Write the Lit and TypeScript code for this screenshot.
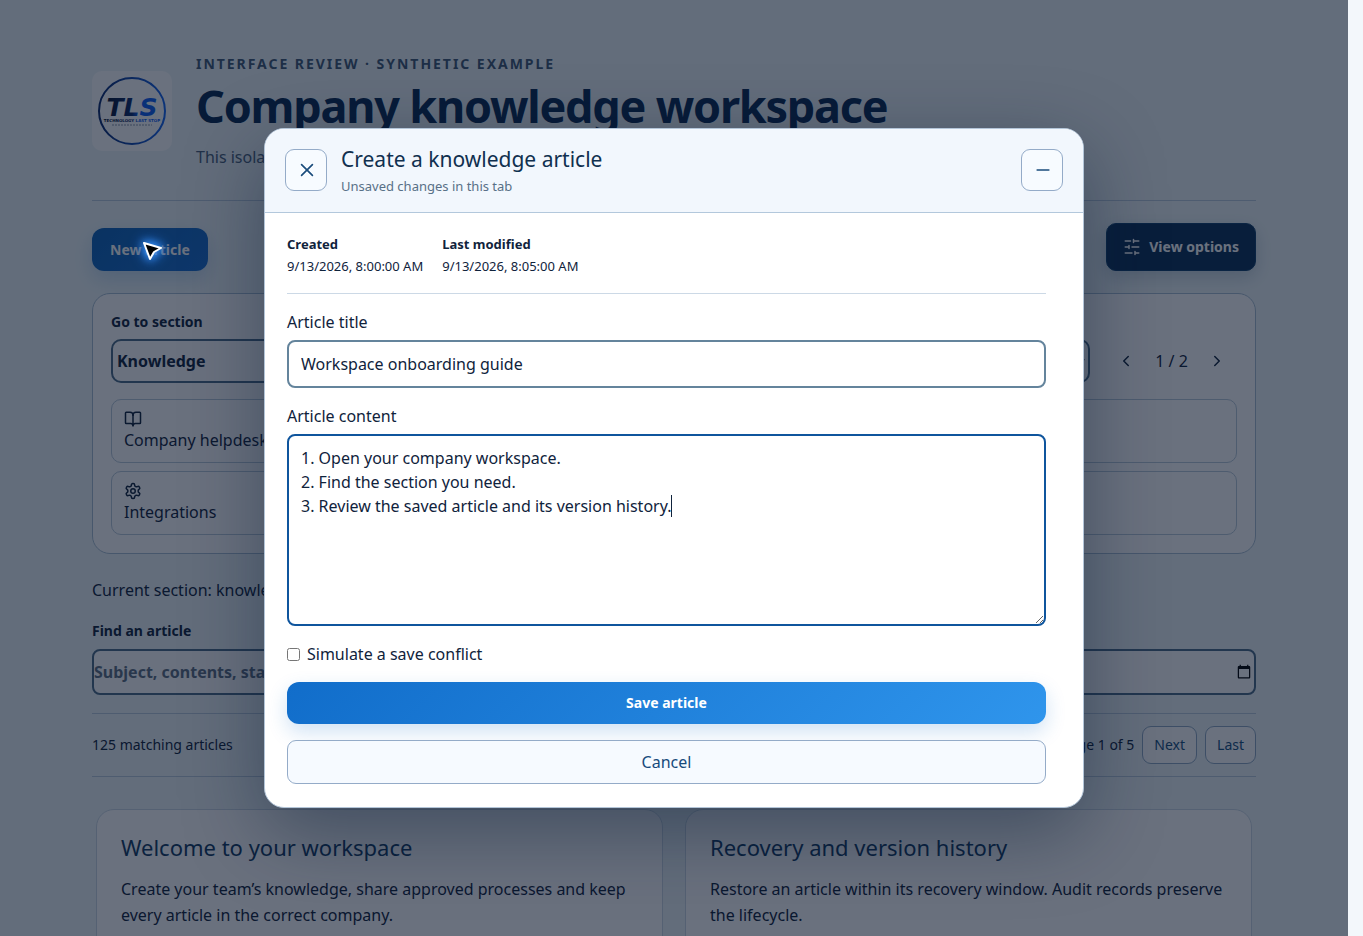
import { LitElement, html, css, svg } from "lit";
import { customElement, state } from "lit/decorators.js";

const logo = html`<svg class="logo" viewBox="0 0 80 80" role="img" aria-label="Technology Last Stop">
  <defs>
    <linearGradient id="ring" x1="0" y1="0" x2="1" y2="0">
      <stop offset="0" stop-color="#0c2a6b" />
      <stop offset="1" stop-color="#1666f0" />
    </linearGradient>
    <linearGradient id="mark" x1="0" y1="0" x2="1" y2="0">
      <stop offset="0" stop-color="#06142f" />
      <stop offset="0.5" stop-color="#0c2a6b" />
      <stop offset="0.62" stop-color="#0d5cf0" />
      <stop offset="1" stop-color="#0d5cf0" />
    </linearGradient>
  </defs>
  <circle cx="40" cy="40" r="33" fill="none" stroke="url(#ring)" stroke-width="2" />
  <text class="mark" x="40" y="45" text-anchor="middle" fill="url(#mark)">TLS</text>
  <text class="motto" x="40" y="51" text-anchor="middle" fill="url(#mark)">TECHNOLOGY LAST STOP</text>
  <path d="M20 54h40" stroke="#8a97ab" stroke-width="1" stroke-dasharray="2 1" />
</svg>`;

const icon = (size: number, body: unknown) => html`<svg
  width=${size}
  height=${size}
  viewBox="0 0 24 24"
  fill="none"
  stroke="currentColor"
  stroke-width="2"
  stroke-linecap="round"
  stroke-linejoin="round"
  aria-hidden="true"
>${body}</svg>`;

const book = svg`<path d="M12 7v14" /><path d="M3 18a1 1 0 0 1-1-1V4a1 1 0 0 1 1-1h5a4 4 0 0 1 4 4 4 4 0 0 1 4-4h5a1 1 0 0 1 1 1v13a1 1 0 0 1-1 1h-6a3 3 0 0 0-3 3 3 3 0 0 0-3-3z" />`;
const gear = svg`<path d="M12.22 2h-.44a2 2 0 0 0-2 2v.18a2 2 0 0 1-1 1.73l-.43.25a2 2 0 0 1-2 0l-.15-.08a2 2 0 0 0-2.73.73l-.22.38a2 2 0 0 0 .73 2.73l.15.1a2 2 0 0 1 1 1.72v.51a2 2 0 0 1-1 1.74l-.15.09a2 2 0 0 0-.73 2.73l.22.38a2 2 0 0 0 2.73.73l.15-.08a2 2 0 0 1 2 0l.43.25a2 2 0 0 1 1 1.73V20a2 2 0 0 0 2 2h.44a2 2 0 0 0 2-2v-.18a2 2 0 0 1 1-1.73l.43-.25a2 2 0 0 1 2 0l.15.08a2 2 0 0 0 2.73-.73l.22-.39a2 2 0 0 0-.73-2.73l-.15-.08a2 2 0 0 1-1-1.74v-.5a2 2 0 0 1 1-1.74l.15-.09a2 2 0 0 0 .73-2.73l-.22-.38a2 2 0 0 0-2.73-.73l-.15.08a2 2 0 0 1-2 0l-.43-.25a2 2 0 0 1-1-1.73V4a2 2 0 0 0-2-2z" /><circle cx="12" cy="12" r="3" />`;
const sliders = svg`<path d="M21 4h-7M10 4H3M21 12h-9M8 12H3M21 20h-5M12 20H3M14 2v4M8 10v4M16 18v4" />`;

@customElement("app-root")
export class AppRoot extends LitElement {
  @state() private content = [
    "1. Open your company workspace.",
    "2. Find the section you need.",
    "3. Review the saved article and its version history.",
  ].join("\n");

  static styles = css`
    :host {
      display: block;
      font: 16px/24px "Noto Sans", sans-serif;
      color: #10233c;
      background: #f3f7fb;
    }
    * {
      box-sizing: border-box;
    }
    h1, h2, p, dl, dd {
      margin: 0;
    }
    button, input, select, textarea {
      font: inherit;
      color: inherit;
      margin: 0;
    }
    button {
      cursor: pointer;
    }
    .viewport {
      display: grid;
      grid-template-columns: minmax(0, 1fr) 15px;
      height: 100vh;
      overflow: hidden;
    }
    .stage {
      position: relative;
      overflow: hidden;
      background: #eef6f8;
    }
    .page {
      max-width: 1164px;
      margin: 0 auto;
      padding-top: 52px;
    }
    .masthead {
      display: flex;
      align-items: center;
      gap: 24px;
      padding-bottom: 31px;
      border-bottom: 1px solid #b9cbdc;
    }
    .logo {
      width: 80px;
      height: 80px;
      border-radius: 10px;
      background: #fff;
      flex: none;
    }
    .mark {
      font: italic bold 25px "DejaVu Sans", sans-serif;
    }
    .motto {
      font: bold 4px "DejaVu Sans", sans-serif;
    }
    .eyebrow {
      font-size: 14px;
      font-weight: 700;
      letter-spacing: 0.14em;
      color: #3f5874;
    }
    h1 {
      font-size: 45px;
      line-height: 60px;
      font-weight: 700;
      letter-spacing: -0.027em;
      color: #082a52;
    }
    .intro {
      margin-top: 9px;
      color: #4a6078;
    }
    .toolbar {
      display: flex;
      justify-content: space-between;
      align-items: center;
      margin-top: 22px;
    }
    .primary {
      border: 0;
      border-radius: 12px;
      padding: 0 18px;
      height: 42px;
      font-size: 14px;
      font-weight: 700;
      color: #fff;
      background: linear-gradient(135deg, #116dca, #2f95ec);
      box-shadow: 0 8px 20px rgba(20, 110, 200, 0.2);
    }
    .toolbar .primary {
      height: 43px;
      margin-top: 5px;
      background: linear-gradient(135deg, #0f63b8, #1a6fd0);
    }
    .options {
      display: flex;
      align-items: center;
      gap: 8px;
      height: 48px;
      padding: 0 16px;
      border: 1px solid #11406c;
      border-radius: 10px;
      font-size: 14px;
      font-weight: 700;
      color: #fff;
      background: #0b3158;
      box-shadow: 0 6px 18px rgba(11, 49, 88, 0.2);
    }
    .panel {
      margin-top: 22px;
      padding: 18px;
      border: 1px solid #a9bfd2;
      border-radius: 18px;
      background: #fff;
    }
    .label {
      display: block;
      font-size: 14px;
      line-height: 20px;
      font-weight: 700;
    }
    .switcher {
      display: flex;
      align-items: center;
      margin-top: 7px;
    }
    .switcher select {
      flex: 1;
      min-width: 0;
      height: 44px;
      border: 2px solid #4c6c88;
      border-radius: 10px;
      background: #fff;
      font-weight: 700;
    }
    .pager {
      display: flex;
      align-items: center;
      padding-left: 16px;
    }
    .pager button {
      display: grid;
      place-items: center;
      width: 40px;
      height: 40px;
      padding: 0;
      border: 0;
      background: none;
    }
    .pager span {
      width: 51px;
      text-align: center;
    }
    .tiles {
      display: grid;
      grid-template-columns: repeat(3, minmax(0, 1fr));
      gap: 8px;
      margin-top: 16px;
    }
    .tile {
      display: flex;
      flex-direction: column;
      align-items: flex-start;
      height: 64px;
      padding: 10px 12px;
      border: 1px solid #b9cad9;
      border-radius: 10px;
      background: #fff;
    }
    .current {
      margin-top: 24px;
    }
    .filters {
      display: grid;
      grid-template-columns: 1fr 1fr;
      gap: 16px;
      margin-top: 19px;
    }
    .filters input {
      display: block;
      width: 100%;
      height: 46px;
      margin-top: 8px;
      padding: 0;
      border: 2px solid #4c6c88;
      border-radius: 8px;
      background: #fff;
      font-weight: 700;
    }
    .filters input::placeholder {
      color: #5d6f82;
    }
    .results {
      display: flex;
      align-items: center;
      gap: 8px;
      height: 64px;
      margin-top: 18px;
      border-top: 1px solid #b9cbdc;
      border-bottom: 1px solid #b9cbdc;
      font-size: 14px;
    }
    .results span:first-child {
      flex: 1;
    }
    .results button {
      height: 38px;
      padding: 0 11px;
      border: 1px solid #8fa9c2;
      border-radius: 9px;
      background: #fff;
      color: #17507f;
    }
    .cards {
      display: grid;
      grid-template-columns: 1fr 1fr;
      gap: 22px;
      padding: 32px 4px 0;
    }
    .card {
      min-height: 220px;
      padding: 23px 24px;
      border: 1px solid #cbd8e4;
      border-radius: 18px;
      background: #fff;
    }
    .card h2 {
      font-size: 22px;
      line-height: 28px;
      font-weight: 400;
      color: #123a63;
    }
    .card p {
      margin-top: 15px;
      line-height: 26px;
    }
    .backdrop {
      position: absolute;
      inset: 0;
      display: flex;
      align-items: center;
      justify-content: center;
      background: rgba(6, 18, 40, 0.6);
    }
    .dialog {
      width: 820px;
      max-width: calc(100% - 32px);
      border: 1px solid #b3c5d8;
      border-radius: 20px;
      overflow: hidden;
      background: #fff;
      box-shadow: 0 24px 80px rgba(3, 22, 50, 0.4);
    }
    .dialog header {
      display: flex;
      align-items: center;
      gap: 14px;
      padding: 15px 20px 16px;
      border-bottom: 1px solid #b3c8dc;
      background: #f2f7fd;
    }
    .heading {
      flex: 1;
    }
    .heading h2 {
      font-size: 21px;
      line-height: 30px;
      font-weight: 400;
      color: #10304f;
    }
    .heading p {
      margin-top: 2px;
      font-size: 13px;
      line-height: 20px;
      color: #587087;
    }
    .square {
      display: grid;
      place-items: center;
      width: 42px;
      height: 42px;
      padding: 0 0 0 2px;
      border: 1px solid #94abc8;
      border-radius: 9px;
      background: #f7fbff;
      color: #1a4c7c;
    }
    .body {
      padding: 20px 37px 23px 22px;
    }
    .meta {
      display: flex;
      gap: 19px;
      padding-bottom: 16px;
      border-bottom: 1px solid #ccd9e6;
      font-size: 13px;
      line-height: 22px;
    }
    .meta dt {
      font-weight: 700;
    }
    .field {
      display: block;
      margin-top: 16px;
    }
    .field input, .field textarea {
      display: block;
      width: 100%;
      padding: 10px 12px;
      border: 2px solid #64849c;
      border-radius: 8px;
      background: #fff;
    }
    .field input {
      height: 48px;
    }
    .field textarea {
      height: 192px;
      resize: vertical;
      caret-color: transparent;
    }
    .field input:focus, .field textarea:focus {
      outline: none;
      border-color: #0f559d;
    }
    .control {
      display: block;
      position: relative;
      margin-top: 6px;
    }
    .caret {
      position: absolute;
      left: 384px;
      top: 61px;
      width: 1px;
      height: 22px;
      background: #10233c;
    }
    .check {
      display: flex;
      align-items: center;
      gap: 7px;
      margin-top: 16px;
    }
    .check input {
      width: 13px;
      height: 13px;
    }
    .actions {
      display: grid;
      gap: 16px;
      margin-top: 16px;
    }
    .cancel {
      height: 44px;
      border: 1px solid #94abc8;
      border-radius: 9px;
      background: #f6faff;
      color: #174a7c;
    }
    .pointer {
      position: absolute;
      left: 132px;
      top: 230px;
      width: 40px;
      height: 40px;
      filter: drop-shadow(0 0 4px #3a94ff) drop-shadow(0 0 6px #2f8cff);
      pointer-events: none;
    }
  `;

  firstUpdated() {
    const area = this.renderRoot.querySelector("textarea")!;
    area.focus();
    area.setSelectionRange(area.value.length, area.value.length);
  }

  private tile(glyph: unknown, name: string) {
    return html`<button class="tile">${icon(18, glyph)}${name}</button>`;
  }

  render() {
    return html`<div class="viewport">
      <div class="stage">
        <main class="page">
          <header class="masthead">
            ${logo}
            <div>
              <p class="eyebrow">INTERFACE REVIEW · SYNTHETIC EXAMPLE</p>
              <h1>Company knowledge workspace</h1>
              <p class="intro">This isolated example</p>
            </div>
          </header>
          <div class="toolbar">
            <button class="primary">New article</button>
            <button class="options">${icon(18, sliders)}View options</button>
          </div>
          <section class="panel">
            <label class="label" for="section">Go to section</label>
            <div class="switcher">
              <select id="section"><option>Knowledge</option></select>
              <div class="pager">
                <button aria-label="Previous">${icon(18, svg`<path d="m15 18-6-6 6-6" />`)}</button>
                <span>1 / 2</span>
                <button aria-label="Next">${icon(18, svg`<path d="m9 18 6-6-6-6" />`)}</button>
              </div>
            </div>
            <div class="tiles">
              ${this.tile(book, "Company helpdesk")} ${this.tile(book, "Knowledge")}
              ${this.tile(book, "Articles")} ${this.tile(gear, "Integrations")}
              ${this.tile(gear, "Settings")} ${this.tile(gear, "History")}
            </div>
          </section>
          <p class="current">Current section: knowledge</p>
          <div class="filters">
            <div>
              <label class="label" for="find">Find an article</label>
              <input id="find" placeholder="Subject, contents, status" />
            </div>
            <div>
              <label class="label" for="date">Date</label>
              <input id="date" type="date" />
            </div>
          </div>
          <div class="results">
            <span>125 matching articles</span>
            <span>Page 1 of 5</span>
            <button>Next</button>
            <button>Last</button>
          </div>
          <div class="cards">
            <article class="card">
              <h2>Welcome to your workspace</h2>
              <p>Create your team’s knowledge, share approved processes and keep every article in the correct company.</p>
            </article>
            <article class="card">
              <h2>Recovery and version history</h2>
              <p>Restore an article within its recovery window. Audit records preserve the lifecycle.</p>
            </article>
          </div>
        </main>
        <div class="backdrop">
          <section class="dialog" role="dialog" aria-modal="true" aria-labelledby="dialog-title">
            <header>
              <button class="square" aria-label="Close">${icon(20, svg`<path d="M18.5 5.5 5.5 18.5M5.5 5.5l13 13" />`)}</button>
              <div class="heading">
                <h2 id="dialog-title">Create a knowledge article</h2>
                <p>Unsaved changes in this tab</p>
              </div>
              <button class="square" aria-label="Minimize">${icon(20, svg`<path d="M5 12h14" />`)}</button>
            </header>
            <div class="body">
              <dl class="meta">
                <div><dt>Created</dt><dd>9/13/2026, 8:00:00 AM</dd></div>
                <div><dt>Last modified</dt><dd>9/13/2026, 8:05:00 AM</dd></div>
              </dl>
              <label class="field">Article title
                <span class="control"><input .value=${"Workspace onboarding guide"} /></span>
              </label>
              <label class="field">Article content
                <span class="control"><textarea .value=${this.content}></textarea><span class="caret"></span></span>
              </label>
              <label class="check"><input type="checkbox" />Simulate a save conflict</label>
              <div class="actions">
                <button class="primary">Save article</button>
                <button class="cancel">Cancel</button>
              </div>
            </div>
          </section>
        </div>
        <svg class="pointer" viewBox="0 0 40 40" aria-hidden="true">
          <path d="M12 13 29 18 22 22 18 29Z" fill="#000" stroke="#fff" stroke-width="2" stroke-linejoin="round" />
        </svg>
      </div>
    </div>`;
  }
}
